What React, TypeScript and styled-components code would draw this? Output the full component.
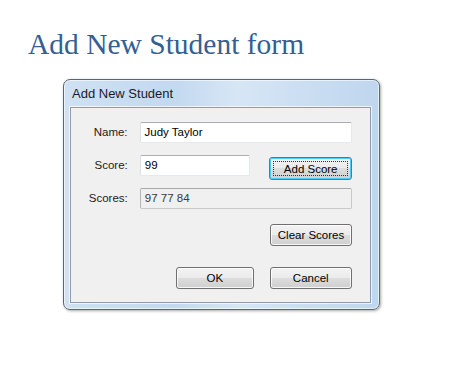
import * as React from 'react';
import styled, { createGlobalStyle } from 'styled-components';

const GlobalStyle = createGlobalStyle`
    html, body {
        margin: 0;
        padding: 0;
        background: #ffffff;
    }
`;

const Page = styled.div`
    width: 471px;
    height: 374px;
    padding: 27px 0 0 28px;
    box-sizing: border-box;
`;

const Heading = styled.h1`
    margin: 0;
    font-family: "Liberation Serif", serif;
    font-size: 29.5px;
    font-weight: 400;
    line-height: 34px;
    color: #365f91;
`;

const Window = styled.div`
    margin: 18px 0 0 35px;
    width: 317px;
    height: 231px;
    box-sizing: border-box;
    border: 1px solid #5c6672;
    border-radius: 7px;
    background: linear-gradient(90deg, #cfe1f3 0%, #c3d9f0 35%, #d6e6f5 55%, #bfd6ee 100%);
    box-shadow: 1px 1px 3px rgba(0, 0, 0, 0.35), inset 0 0 0 1px rgba(255, 255, 255, 0.6);
    padding: 0 8px 6px 6px;
    display: flex;
    flex-direction: column;
    font-family: "Liberation Sans", Arial, sans-serif;
`;

const TitleBar = styled.div`
    height: 27px;
    display: flex;
    align-items: center;
    padding-left: 2px;
    font-size: 13px;
    color: #1a1a2a;
`;

const Client = styled.div`
    flex: 1;
    background: #f0f0f0;
    border: 1px solid #8d9cad;
    box-shadow: 0 0 0 1px rgba(255, 255, 255, 0.7);
    display: flex;
    flex-direction: column;
    padding: 14px 18px 0 0;
    font-size: 11.5px;
    color: #000;
`;

const Row = styled.div<{ $top: number; $align?: string }>`
    display: flex;
    align-items: ${(p) => p.$align || 'center'};
    margin-top: ${(p) => p.$top}px;
    justify-content: flex-start;
`;

const Label = styled.div`
    width: 57px;
    text-align: right;
    margin-right: 12px;
    height: 21px;
    line-height: 21px;
    color: #1e1a18;
`;

const TextBox = styled.div<{ $width: number; $readOnly?: boolean }>`
    width: ${(p) => p.$width}px;
    height: 21px;
    box-sizing: border-box;
    padding: 0 4px;
    line-height: 19px;
    border: 1px solid ${(p) => (p.$readOnly ? '#c9c9c9' : '#e3e9ef')};
    border-top-color: ${(p) => (p.$readOnly ? '#a9a9a9' : '#abadb3')};
    border-left-color: ${(p) => (p.$readOnly ? '#b5b5b5' : '#dbdfe6')};
    border-radius: 2px;
    background: ${(p) => (p.$readOnly ? '#f0f0f0' : '#ffffff')};
    color: ${(p) => (p.$readOnly ? '#3a3a3a' : '#000')};
`;

const Spacer = styled.div<{ $width: number }>`
    width: ${(p) => p.$width}px;
    flex-shrink: 0;
`;

const Button = styled.div<{ $width: number; $default?: boolean }>`
    width: ${(p) => p.$width}px;
    height: 22px;
    box-sizing: border-box;
    border: 1px solid ${(p) => (p.$default ? '#3c7fb1' : '#707070')};
    border-radius: 3px;
    background: linear-gradient(180deg, #f3f3f3 0%, #ebebeb 49%, #dddddd 50%, #cfcfcf 100%);
    box-shadow: inset 0 0 0 1px ${(p) => (p.$default ? '#48cff5' : 'rgba(255, 255, 255, 0.8)')};
    display: flex;
    align-items: center;
    justify-content: center;
    color: #000;
    position: relative;
`;

const FocusRect = styled.span`
    position: absolute;
    inset: 3px;
    border: 1px dotted #333;
`;

const ButtonText = styled.span`
    position: relative;
`;

export default function App() {
    return (
        <Page>
            <GlobalStyle />
            <Heading>Add New Student form</Heading>
            <Window>
                <TitleBar>Add New Student</TitleBar>
                <Client>
                    <Row $top={0}>
                        <Label>Name:</Label>
                        <TextBox $width={214}>Judy Taylor</TextBox>
                    </Row>
                    <Row $top={12} $align="flex-start">
                        <Label>Score:</Label>
                        <TextBox $width={111}>99</TextBox>
                        <Spacer $width={19} />
                        <Button $width={83} $default style={{ height: 23, marginTop: 2 }}>
                            <FocusRect />
                            <ButtonText>Add Score</ButtonText>
                        </Button>
                    </Row>
                    <Row $top={8}>
                        <Label>Scores:</Label>
                        <TextBox $width={213} $readOnly>97 77 84</TextBox>
                    </Row>
                    <Row $top={15}>
                        <Spacer $width={199} />
                        <Button $width={83}>Clear Scores</Button>
                    </Row>
                    <Row $top={21}>
                        <Spacer $width={105} />
                        <Button $width={78}>OK</Button>
                        <Spacer $width={16} />
                        <Button $width={83}>Cancel</Button>
                    </Row>
                </Client>
            </Window>
        </Page>
    );
}
